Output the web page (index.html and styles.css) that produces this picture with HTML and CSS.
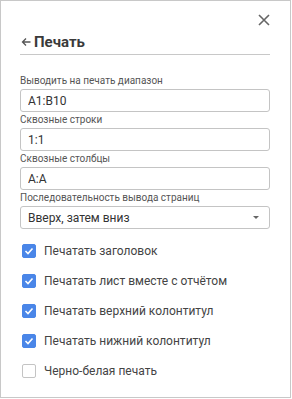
FILE: index.html
```html
<!DOCTYPE html>
<html lang="ru">
<head>
    <meta charset="UTF-8">
    <meta name="viewport" content="width=device-width, initial-scale=1.0">
    <title>Печать</title>
    <link rel="stylesheet" href="styles.css">
</head>
<body>
    <div class="panel">
        <div class="panel-top">
            <button class="close-btn" title="Закрыть">
                <svg width="12" height="12" viewBox="0 0 12 12">
                    <path d="M1 1 L11 11 M11 1 L1 11" stroke="#666" stroke-width="1.6" fill="none"/>
                </svg>
            </button>
        </div>
        <div class="panel-title">
            <svg class="back" width="10" height="10" viewBox="0 0 10 10">
                <path d="M9.5 5 H1.5 M5 1.5 L1.5 5 L5 8.5" stroke="#555" stroke-width="1.3" fill="none"/>
            </svg>
            <span>Печать</span>
        </div>

        <form class="print-form">
            <label class="field-label" for="range">Выводить на печать диапазон</label>
            <input class="field" type="text" id="range" value="A1:B10">

            <label class="field-label" for="rows">Сквозные строки</label>
            <input class="field" type="text" id="rows" value="1:1">

            <label class="field-label" for="cols">Сквозные столбцы</label>
            <input class="field" type="text" id="cols" value="A:A">

            <span class="field-label">Последовательность вывода страниц</span>
            <div class="field select">
                <span>Вверх, затем вниз</span>
                <span class="caret"></span>
            </div>

            <div class="checks">
                <label class="check-row"><span class="box checked"></span>Печатать заголовок</label>
                <label class="check-row"><span class="box checked"></span>Печатать лист вместе с отчётом</label>
                <label class="check-row"><span class="box checked"></span>Печатать верхний колонтитул</label>
                <label class="check-row"><span class="box checked"></span>Печатать нижний колонтитул</label>
                <label class="check-row"><span class="box"></span>Черно-белая печать</label>
            </div>
        </form>
    </div>
</body>
</html>
```

FILE: styles.css
```css
body {
    margin: 0;
    font-family: Roboto, "Liberation Sans", sans-serif;
    background: #fff;
}

.panel {
    box-sizing: border-box;
    width: 291px;
    height: 398px;
    border: 1px solid #c8c8c8;
    padding: 0 20px 0 19px;
    background: #fff;
}

.panel-top {
    display: flex;
    justify-content: flex-end;
    margin-top: 13px;
    height: 12px;
}

.close-btn {
    border: none;
    background: none;
    padding: 0;
    width: 12px;
    height: 12px;
    cursor: pointer;
    display: flex;
}

.panel-title {
    display: flex;
    align-items: center;
    gap: 3px;
    height: 24px;
    margin-top: 4px;
    border-bottom: 1px solid #c8c8c8;
    font-size: 15px;
    font-weight: bold;
    color: #3a3a3a;
}

.panel-title .back {
    margin-left: 1px;
}

.print-form {
    display: flex;
    flex-direction: column;
    margin-top: 18px;
}

.field-label {
    display: block;
    height: 16px;
    line-height: 16px;
    font-size: 10px;
    color: #555;
}

.field {
    box-sizing: border-box;
    width: 250px;
    height: 23px;
    margin: 0;
    border: 1px solid #c4c4c4;
    border-radius: 3px;
    padding: 0 7px;
    font-family: inherit;
    font-size: 12px;
    color: #333;
    outline: none;
}

.select {
    display: flex;
    align-items: center;
    justify-content: space-between;
    padding-right: 10px;
}

.caret {
    width: 0;
    height: 0;
    border-left: 3px solid transparent;
    border-right: 3px solid transparent;
    border-top: 3px solid #666;
}

.checks {
    margin-top: 7px;
    display: flex;
    flex-direction: column;
}

.check-row {
    display: flex;
    align-items: center;
    gap: 8px;
    height: 30px;
    padding-left: 2px;
    font-size: 12px;
    color: #444;
}

.box {
    box-sizing: border-box;
    width: 14px;
    height: 14px;
    border: 1px solid #c4c4c4;
    border-radius: 2px;
    background: #fff;
}

.box.checked {
    border-color: #4a86e8;
    background: #4a86e8 url("data:image/svg+xml,%3Csvg xmlns='http://www.w3.org/2000/svg' width='14' height='14' viewBox='0 0 14 14'%3E%3Cpath d='M3.5 7 L6 9.5 L10.5 4.5' stroke='white' stroke-width='1.6' fill='none'/%3E%3C/svg%3E") center / 14px 14px no-repeat;
}
```
